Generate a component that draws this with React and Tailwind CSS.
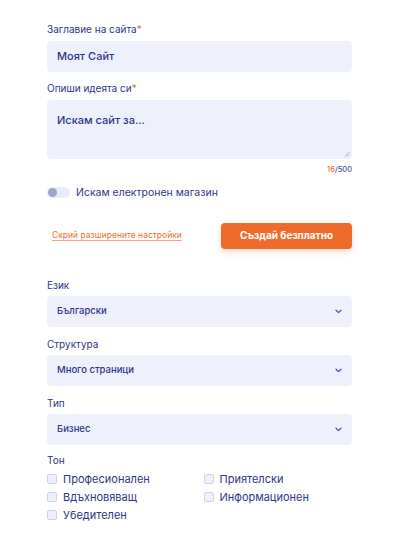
import React from "react";

const font = { fontFamily: "Inter, 'Noto Sans', sans-serif" };

function Label({ children, required }) {
  return (
    <label className="block text-[10px] leading-[14px] text-[#30358a]">
      {children}
      {required && <span className="text-[#ef6b2e]">*</span>}
    </label>
  );
}

function Chevron() {
  return (
    <svg width="7" height="5" viewBox="0 0 7 5" fill="none" className="shrink-0">
      <path d="M1 1.2 3.5 3.6 6 1.2" stroke="#4a4f95" strokeWidth="1.2" strokeLinecap="round" strokeLinejoin="round" />
    </svg>
  );
}

function SelectBox({ value }) {
  return (
    <div className="mt-[4px] h-[31px] rounded-[4px] bg-[#eef1fb] flex items-center justify-between pl-[10px] pr-[10px]">
      <span className="text-[9.5px] font-medium text-[#30358a]">{value}</span>
      <Chevron />
    </div>
  );
}

function Check({ children }) {
  return (
    <div className="flex items-center h-[18px] gap-[6px]">
      <span className="w-[10px] h-[10px] rounded-[2px] border border-[#cdd2ea] bg-[#eef1fb]" />
      <span className="text-[11px] text-[#30358a]">{children}</span>
    </div>
  );
}

export default function App() {
  return (
    <div className="w-[400px] h-[540px] bg-white" style={font}>
      <div className="w-[305px] ml-[47px] pt-[22px]">
        <Label required>Заглавие на сайта</Label>
        <div className="mt-[5px] h-[31px] rounded-[4px] bg-[#eef1fb] flex items-center pl-[10px]">
          <span className="text-[11px] font-medium text-[#30358a]">Моят Сайт</span>
        </div>

        <div className="mt-[9px]">
          <Label required>Опиши идеята си</Label>
        </div>
        <div className="relative mt-[5px] h-[59px] rounded-[4px] bg-[#eef1fb] pl-[10px] pt-[11px] leading-[14px]">
          <span className="text-[11px] font-medium text-[#30358a]">Искам сайт за...</span>
          <svg className="absolute right-[2px] bottom-[2px]" width="6" height="6" viewBox="0 0 6 6">
            <path d="M5.5 1 1 5.5M5.5 3.5 3.5 5.5" stroke="#9a9eb8" strokeWidth="0.8" />
          </svg>
        </div>
        <div className="mt-[6px] text-right text-[7.5px] leading-[10px] font-medium text-[#4a4f95]">
          <span className="text-[#ef6b2e]">16</span>/500
        </div>

        <div className="mt-[10px] flex items-center gap-[6px]">
          <div className="w-[23px] h-[11px] rounded-full bg-[#e9ecf8] flex items-center pl-[1px]">
            <span className="w-[9px] h-[9px] rounded-full bg-[#9ea3c9]" />
          </div>
          <span className="text-[10.5px] text-[#30358a]">Искам електронен магазин</span>
        </div>

        <div className="mt-[22px] flex items-center justify-between">
          <a className="ml-[5px] text-[8.5px] text-[#ef6b2e] underline underline-offset-2 decoration-[#f5a57e]">
            Скрий разширените настройки
          </a>
          <button className="w-[131px] h-[26px] rounded-[4px] bg-[#ee6b2c] text-white text-[10px] font-bold shadow-[0_3px_6px_rgba(238,107,44,0.25)]">
            Създай безплатно
          </button>
        </div>

        <div className="mt-[29px]">
          <Label>Език</Label>
          <SelectBox value="Български" />
        </div>
        <div className="mt-[10px]">
          <Label>Структура</Label>
          <SelectBox value="Много страници" />
        </div>
        <div className="mt-[10px]">
          <Label>Тип</Label>
          <SelectBox value="Бизнес" />
        </div>

        <div className="mt-[8px]">
          <Label>Тон</Label>
          <div className="mt-[3px] grid grid-cols-2">
            <Check>Професионален</Check>
            <div className="pl-[4px]"><Check>Приятелски</Check></div>
            <Check>Вдъхновяващ</Check>
            <div className="pl-[4px]"><Check>Информационен</Check></div>
            <Check>Убедителен</Check>
          </div>
        </div>
      </div>
    </div>
  );
}
